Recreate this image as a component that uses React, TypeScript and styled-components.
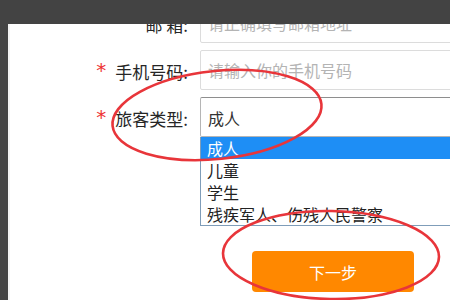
import styled, { createGlobalStyle } from 'styled-components';

const GlobalStyle = createGlobalStyle`
  html, body {
    margin: 0;
    padding: 0;
    background: #434343;
  }
  * {
    box-sizing: border-box;
  }
`;

const passengerTypes = ['成人', '儿童', '学生', '残疾军人、伤残人民警察'];

const App = () => {
  return (
    <>
      <GlobalStyle />
      <Page>
        <TopBar />
        <Body>
          <Gutter />
          <Panel>
            <Form>
              <Row>
                <Label>邮 箱:</Label>
                <TextInput placeholder="请正确填写邮箱地址" />
              </Row>
              <Row>
                <Label>
                  <Required>*</Required>手机号码:
                </Label>
                <TextInput placeholder="请输入你的手机号码" />
              </Row>
              <Row>
                <Label>
                  <Required>*</Required>旅客类型:
                </Label>
                <SelectField>
                  <SelectBox>成人</SelectBox>
                  <OptionList>
                    {passengerTypes.map((type, i) => (
                      <Option key={type} $active={i === 0}>
                        {type}
                      </Option>
                    ))}
                  </OptionList>
                </SelectField>
              </Row>
              <Actions>
                <NextButton>下一步</NextButton>
              </Actions>
            </Form>
          </Panel>
        </Body>
        <Marks viewBox="0 0 450 300" width="450" height="300">
          <ellipse
            cx="217"
            cy="115"
            rx="105"
            ry="44"
            transform="rotate(-6 217 115)"
            fill="none"
            stroke="#e8353a"
            strokeWidth="2.6"
          />
          <ellipse
            cx="331"
            cy="255"
            rx="108"
            ry="44"
            transform="rotate(1 331 255)"
            fill="none"
            stroke="#e8353a"
            strokeWidth="2.6"
          />
        </Marks>
      </Page>
    </>
  );
};

export default App;

const Page = styled.div`
  position: relative;
  display: flex;
  flex-direction: column;
  width: 450px;
  height: 300px;
  overflow: hidden;
  background: #434343;
  font-family: 'Noto Sans CJK SC', 'Noto Sans', sans-serif;
`;

const TopBar = styled.div`
  height: 24px;
  flex-shrink: 0;
  background: #434343;
`;

const Body = styled.div`
  display: flex;
  flex: 1;
  min-height: 0;
`;

const Gutter = styled.div`
  width: 8px;
  flex-shrink: 0;
  background: #434343;
`;

const Panel = styled.div`
  flex: 1;
  overflow: hidden;
  background: #ffffff;
  border-left: 2px solid #f2f2f2;
`;

const Form = styled.div`
  display: flex;
  flex-direction: column;
  gap: 7px;
  margin-top: -21px;
  margin-left: -2px;
`;

const Row = styled.div`
  display: flex;
  align-items: center;
  height: 40px;
`;

const Label = styled.div`
  display: flex;
  align-items: center;
  justify-content: flex-end;
  width: 180px;
  flex-shrink: 0;
  margin-right: 12px;
  padding-top: 3px;
  font-size: 17px;
  color: #262626;
  white-space: nowrap;
`;

const Required = styled.span`
  margin-right: 9px;
  margin-top: -3px;
  font-family: 'DejaVu Sans', sans-serif;
  font-size: 20px;
  color: #ee3333;
`;

const TextInput = styled.input`
  width: 300px;
  height: 40px;
  flex-shrink: 0;
  padding: 0 7px;
  border: 1px solid #dcdcdc;
  border-radius: 2px;
  font-family: 'Noto Sans CJK SC', sans-serif;
  font-size: 16px;
  color: #333333;
  outline: none;

  &::placeholder {
    color: #b4b4b4;
  }
`;

const SelectField = styled.div`
  position: relative;
  width: 300px;
  height: 40px;
  flex-shrink: 0;
`;

const SelectBox = styled.div`
  display: flex;
  align-items: center;
  height: 40px;
  padding: 2px 7px 0;
  border: 1px solid #b5b5b5;
  border-top-color: #8e8e8e;
  border-radius: 2px;
  font-size: 16px;
  color: #333333;
`;

const OptionList = styled.div`
  position: absolute;
  top: 40px;
  left: 0;
  width: 300px;
  border: 1px solid #7f9db9;
  border-top: none;
  background: #ffffff;
`;

const Option = styled.div<{ $active?: boolean }>`
  height: 22px;
  padding-left: 6px;
  font-size: 16px;
  line-height: 22px;
  white-space: nowrap;
  color: ${p => (p.$active ? '#ffffff' : '#222222')};
  background: ${p => (p.$active ? '#1e8ef5' : 'transparent')};
`;

const Actions = styled.div`
  display: flex;
  margin-top: 107px;
  padding-left: 244px;
`;

const NextButton = styled.button`
  width: 162px;
  height: 41px;
  flex-shrink: 0;
  border: none;
  border-radius: 4px;
  background: #ff8800;
  font-family: 'Noto Sans CJK SC', sans-serif;
  font-size: 16px;
  color: #ffffff;
  cursor: pointer;
`;

const Marks = styled.svg`
  position: absolute;
  top: 0;
  left: 0;
  pointer-events: none;
`;
